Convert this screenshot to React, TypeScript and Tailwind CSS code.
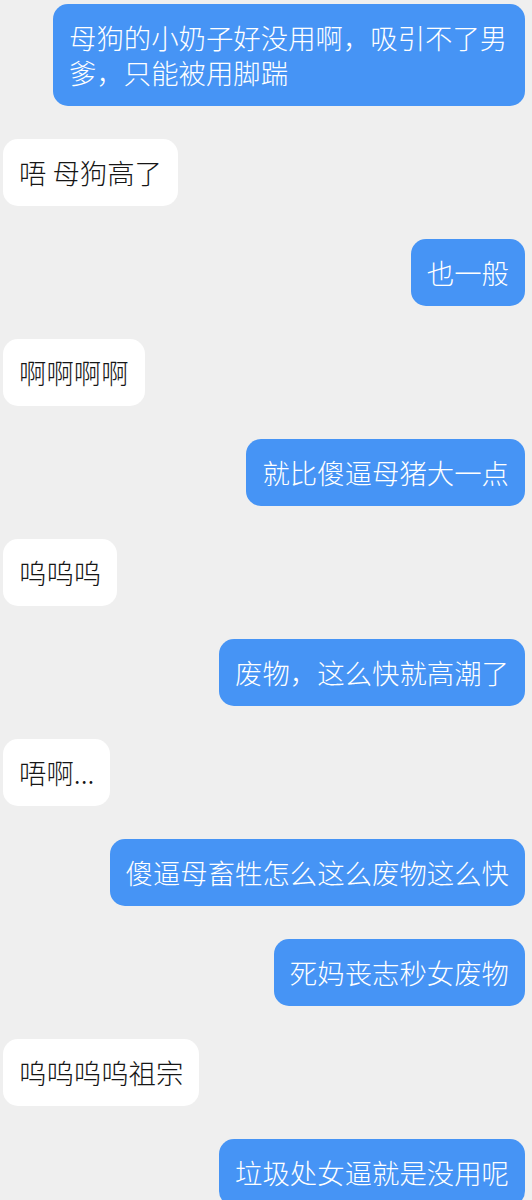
import React from "react";

type Message = {
  id: number;
  mine: boolean;
  text: string;
};

const messages: Message[] = [
  { id: 1, mine: true, text: "母狗的小奶子好没用啊，吸引不了男爹，只能被用脚踹" },
  { id: 2, mine: false, text: "唔 母狗高了" },
  { id: 3, mine: true, text: "也一般" },
  { id: 4, mine: false, text: "啊啊啊啊" },
  { id: 5, mine: true, text: "就比傻逼母猪大一点" },
  { id: 6, mine: false, text: "呜呜呜" },
  { id: 7, mine: true, text: "废物，这么快就高潮了" },
  { id: 8, mine: false, text: "唔啊..." },
  { id: 9, mine: true, text: "傻逼母畜牲怎么这么废物这么快" },
  { id: 10, mine: true, text: "死妈丧志秒女废物" },
  { id: 11, mine: false, text: "呜呜呜呜祖宗" },
  { id: 12, mine: true, text: "垃圾处女逼就是没用呢" },
];

const Bubble: React.FC<{ message: Message }> = ({ message }) => {
  return (
    <div className={message.mine ? "flex justify-end" : "flex justify-start"}>
      <div
        className={
          message.mine
            ? "max-w-[472px] rounded-[15px] bg-[#4694f5] px-4 py-4 text-white"
            : "max-w-[472px] rounded-[15px] bg-white px-4 py-4 text-[#161616]"
        }
      >
        <p className="text-[27.4px] font-light leading-[35px] break-all">{message.text}</p>
      </div>
    </div>
  );
};

export default function App() {
  return (
    <div
      className="h-[1200px] overflow-hidden bg-[#efefef] pl-[3px] pr-[7px] pt-[4px]"
      style={{ fontFamily: '"Noto Sans CJK SC", "Noto Sans", sans-serif' }}
    >
      <div className="flex flex-col gap-[33px]">
        {messages.map((m) => (
          <Bubble key={m.id} message={m} />
        ))}
      </div>
    </div>
  );
}
